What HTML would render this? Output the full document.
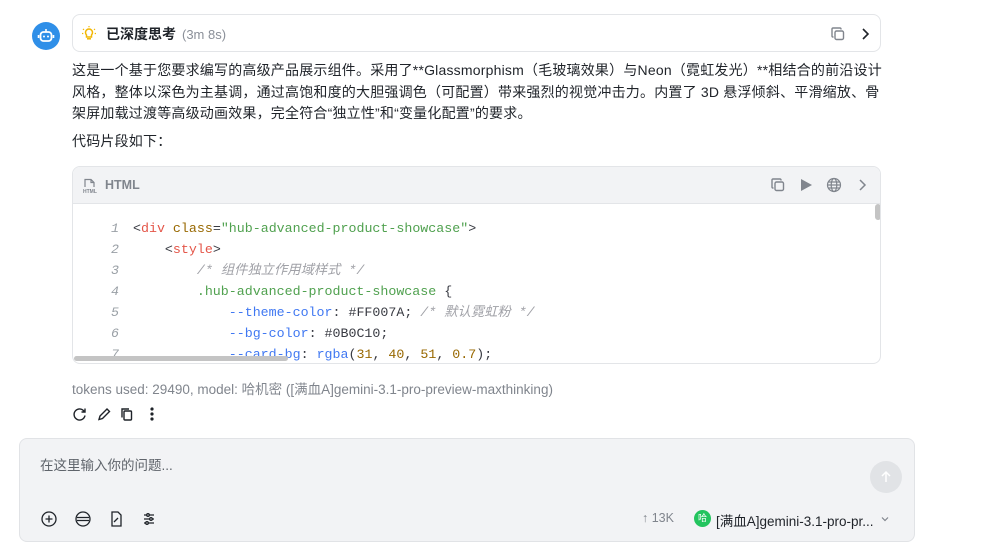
<!DOCTYPE html>
<html><head><meta charset="utf-8"><style>
*{box-sizing:border-box;margin:0;padding:0}
body{width:999px;height:550px;background:#fff;font-family:"Liberation Sans","Noto Sans CJK SC",sans-serif;color:#1f2329;position:relative;overflow:hidden}
.abs{position:absolute}
.avatar{left:32px;top:22px;width:28px;height:28px;border-radius:50%;background:#2f8fe8}
.think{left:72px;top:14px;width:809px;height:38px;border:1px solid #e3e5e8;border-radius:8px}
.think .t{position:absolute;left:33px;top:9px;font-size:14px;font-weight:bold;color:#1f2329}
.think .t span{font-weight:normal;color:#8a8f98;font-size:13px;margin-left:6px}
.para{left:72px;top:60px;width:830px;font-size:14px;line-height:21.5px;color:#1f2329;white-space:nowrap;letter-spacing:0.2px}
.code{left:72px;top:166px;width:809px;height:198px;border:1px solid #e3e5e8;border-radius:8px;overflow:hidden}
.code .hd{height:37px;background:#f2f3f5;border-bottom:1px solid #e3e5e8;position:relative}
.code .hd .l{position:absolute;left:32px;top:11px;font-size:12.5px;font-weight:bold;color:#80858d}
pre{font-family:"Liberation Mono","Noto Sans CJK SC",monospace;font-size:13.3px;line-height:21px;position:absolute;left:0;top:51px;color:#383a42}
.n{display:inline-block;width:46px;text-align:right;color:#9aa0a6;font-style:italic;margin-right:14px}
.tg{color:#e45649}.at{color:#986801}.s{color:#50a14f}.c{color:#a0a1a7;font-style:italic}.p{color:#4078f2}.num{color:#986801}
.sb{left:1px;top:189px;width:214px;height:5px;border-radius:3px;background:#c4c4c4}
.vs{left:802px;top:37px;width:6px;height:16px;border-radius:3px;background:#c4c4c4}
.meta{left:72px;top:378px;font-size:13.5px;color:#80858d}
.input{left:19px;top:438px;width:896px;height:104px;background:#f2f3f5;border:1px solid #e1e3e6;border-radius:8px}
</style></head><body>
<div class="abs avatar"><svg width="28" height="28" viewBox="0 0 28 28"><rect x="8.5" y="10" width="11" height="9" rx="3" fill="none" stroke="#fff" stroke-width="1.8"/><circle cx="12" cy="14.5" r="1" fill="#fff"/><circle cx="16" cy="14.5" r="1" fill="#fff"/><line x1="14" y1="7" x2="14" y2="10" stroke="#fff" stroke-width="1.6"/><line x1="6.5" y1="13" x2="6.5" y2="16" stroke="#fff" stroke-width="1.6"/><line x1="21.5" y1="13" x2="21.5" y2="16" stroke="#fff" stroke-width="1.6"/></svg></div>
<div class="abs think">
<svg class="abs" style="left:8px;top:10px" width="16" height="16" viewBox="0 0 16 16"><path d="M5.5 10a3.5 3.5 0 1 1 5 0v2h-5z" fill="none" stroke="#f2b705" stroke-width="1.5"/><line x1="6" y1="13.8" x2="10" y2="13.8" stroke="#f2b705" stroke-width="1.5"/><path d="M8 1v1.3M2 4l1 .8M14 4l-1 .8M1 8.5h1.3M15 8.5h-1.3" stroke="#f2b705" stroke-width="1.2"/></svg>
<div class="t">已深度思考<span>(3m 8s)</span></div>
<svg class="abs" style="left:757px;top:11px" width="16" height="16" viewBox="0 0 16 16" fill="none" stroke="#80858d" stroke-width="1.4"><rect x="5" y="5" width="8.5" height="8.5" rx="1.5"/><path d="M11 3.5V3a1 1 0 0 0-1-1H3a1 1 0 0 0-1 1v7a1 1 0 0 0 1 1h.5"/></svg>
<svg class="abs" style="left:784px;top:11px" width="16" height="16" viewBox="0 0 16 16" fill="none" stroke="#1f2329" stroke-width="1.6"><path d="M6 3l5 5-5 5"/></svg>
</div>
<div class="abs para">这是一个基于您要求编写的高级产品展示组件。采用了**Glassmorphism（毛玻璃效果）与Neon（霓虹发光）**相结合的前沿设计<br>风格，整体以深色为主基调，通过高饱和度的大胆强调色（可配置）带来强烈的视觉冲击力。内置了 3D 悬浮倾斜、平滑缩放、骨<br>架屏加载过渡等高级动画效果，完全符合“独立性”和“变量化配置”的要求。<div style="margin-top:6px">代码片段如下：</div></div>
<div class="abs code">
<div class="hd">
<svg class="abs" style="left:9px;top:11px" width="16" height="16" viewBox="0 0 16 16" fill="none" stroke="#80858d" stroke-width="1.2"><path d="M3 9V1.5h6l3 3V9M9 1.5v3h3"/><text x="1" y="15" font-size="5" fill="#80858d" stroke="none" font-family="Liberation Sans" font-weight="bold">HTML</text></svg>
<div class="l">HTML</div>
<svg class="abs" style="left:697px;top:10px" width="16" height="16" viewBox="0 0 16 16" fill="none" stroke="#80858d" stroke-width="1.4"><rect x="5" y="5" width="8.5" height="8.5" rx="1.5"/><path d="M11 3.5V3a1 1 0 0 0-1-1H3a1 1 0 0 0-1 1v7a1 1 0 0 0 1 1h.5"/></svg>
<svg class="abs" style="left:725px;top:10px" width="16" height="16" viewBox="0 0 16 16"><path d="M3 2l11 6-11 6z" fill="#80858d"/></svg>
<svg class="abs" style="left:753px;top:10px" width="16" height="16" viewBox="0 0 16 16" fill="none" stroke="#80858d" stroke-width="1.2"><circle cx="8" cy="8" r="6.5"/><ellipse cx="8" cy="8" rx="2.8" ry="6.5"/><path d="M1.5 8h13M2.5 5h11M2.5 11h11"/></svg>
<svg class="abs" style="left:781px;top:10px" width="16" height="16" viewBox="0 0 16 16" fill="none" stroke="#80858d" stroke-width="1.5"><path d="M6 3l5 5-5 5"/></svg>
</div>
<pre><span class="n">1</span>&lt;<span class="tg">div</span> <span class="at">class</span>=<span class="s">"hub-advanced-product-showcase"</span>&gt;
<span class="n">2</span>    &lt;<span class="tg">style</span>&gt;
<span class="n">3</span>        <span class="c">/* 组件独立作用域样式 */</span>
<span class="n">4</span>        <span class="s">.hub-advanced-product-showcase</span> {
<span class="n">5</span>            <span class="p">--theme-color</span>: #FF007A; <span class="c">/* 默认霓虹粉 */</span>
<span class="n">6</span>            <span class="p">--bg-color</span>: #0B0C10;
<span class="n">7</span>            <span class="p">--card-bg</span>: <span class="p">rgba</span>(<span class="num">31</span>, <span class="num">40</span>, <span class="num">51</span>, <span class="num">0.7</span>);</pre>
<div class="abs sb"></div><div class="abs vs"></div>
</div>
<div class="abs meta">tokens used: 29490, model: 哈机密 ([满血A]gemini-3.1-pro-preview-maxthinking)</div>
<svg class="abs" style="left:72px;top:406px" width="90" height="16" viewBox="0 0 90 16" fill="none" stroke="#1f2329" stroke-width="1.4"><path d="M12.5 6A5.5 5.5 0 1 0 13 9.5M13 2.5V6H9.5"/><path d="M27 13.5l1-3.5 7-7 2.5 2.5-7 7z"/><rect x="52" y="5" width="7.5" height="9" rx="1"/><path d="M57 3H50v8.5"/><circle cx="80" cy="3" r=".9" fill="#1f2329"/><circle cx="80" cy="8" r=".9" fill="#1f2329"/><circle cx="80" cy="13" r=".9" fill="#1f2329"/></svg>
<div class="abs input">
<div class="abs" style="left:20px;top:15px;font-size:13.5px;color:#5f646b">在这里输入你的问题...</div>
<div class="abs" style="left:850px;top:22px;width:32px;height:32px;border-radius:50%;background:#e1e3e6"><svg width="32" height="32" viewBox="0 0 32 32" fill="none" stroke="#fff" stroke-width="1.5"><path d="M16 21V11M12 15l4-4 4 4"/></svg></div>
<svg class="abs" style="left:20px;top:71px" width="150" height="18" viewBox="0 0 150 18" fill="none" stroke="#1f2329" stroke-width="1.3"><circle cx="9" cy="9" r="7"/><path d="M9 5.5v7M5.5 9h7"/><circle cx="43" cy="9" r="7"/><path d="M37 7.5h12M37 10.5h12"/><path d="M72 2h6l3 3v11h-9zM74 12l4-4"/><path d="M104 5h10M104 9h10M104 13h10"/><circle cx="108" cy="5" r="1.3" fill="#f2f3f5"/><circle cx="111" cy="9" r="1.3" fill="#f2f3f5"/><circle cx="107" cy="13" r="1.3" fill="#f2f3f5"/></svg>
<div class="abs" style="left:622px;top:72px;font-size:12.5px;color:#80858d">↑ 13K</div>
<div class="abs" style="left:674px;top:71px;width:17px;height:17px;border-radius:50%;background:#23c45e;color:#fff;font-size:9px;text-align:center;line-height:17px">哈</div>
<div class="abs" style="left:696px;top:71px;font-size:13.5px;color:#1f2329">[满血A]gemini-3.1-pro-pr...</div>
<svg class="abs" style="left:860px;top:75px" width="10" height="10" viewBox="0 0 10 10" fill="none" stroke="#80858d" stroke-width="1.2"><path d="M2 3.5l3 3 3-3"/></svg>
</div>
</body></html>
